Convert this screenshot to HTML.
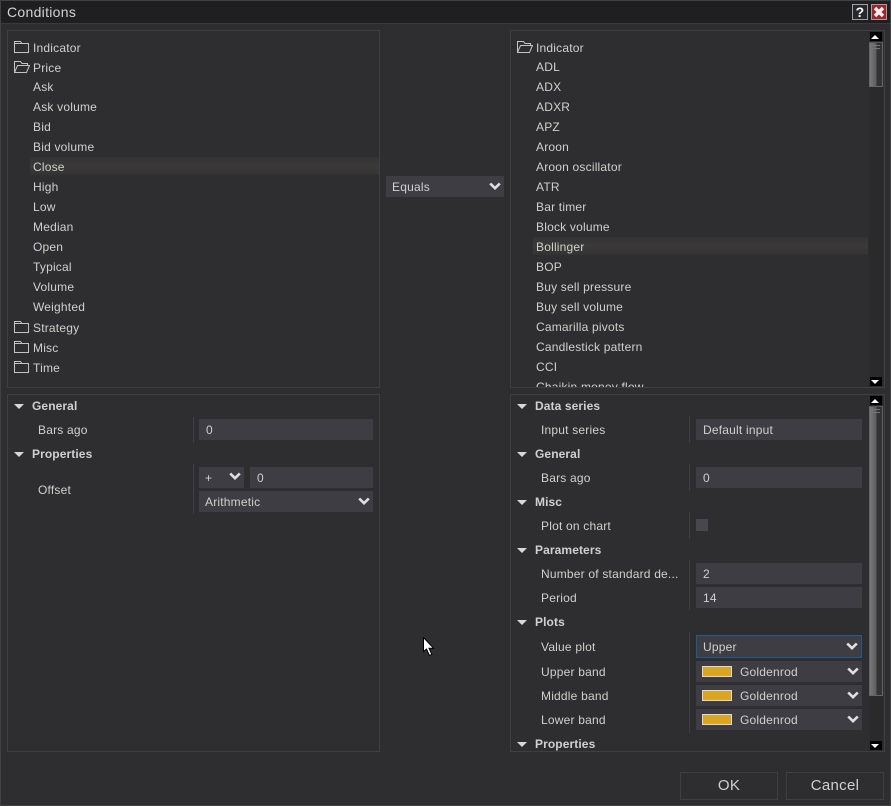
<!DOCTYPE html>
<html><head><meta charset="utf-8"><style>
html,body{margin:0;padding:0;background:#2e2e30}
#r{position:relative;width:891px;height:806px;overflow:hidden;background:#2e2e30;font:12px/16px "Liberation Sans",sans-serif;color:#d0d0cc;letter-spacing:.2px}
#r div,#r svg{position:absolute}
.t{white-space:nowrap;height:16px}
.p{border:1px solid #3f3f41;box-sizing:border-box}
.h{font-weight:bold;color:#d0d0d0;white-space:nowrap;height:16px;letter-spacing:.1px}
.f{background:#3e3d43;height:21px;line-height:23px;white-space:nowrap;box-sizing:border-box;padding-left:7px}
.v{background:#3f3f41;width:1px}
.tri{width:0;height:0;border-left:5px solid transparent;border-right:5px solid transparent;border-top:5px solid #d8d8d8}
.sw{width:30px;height:11px;background:#daa520;border:1px solid #d9d9d9;box-sizing:border-box}
.sb{background:#000;width:12px;height:9px}
.btn{border:1px solid #3f3f41;box-sizing:border-box;height:28px;line-height:26px;text-align:center;font-size:15px;color:#d0d0d0;letter-spacing:.3px}
.trk{background:#2a2a2b;width:14px}
.th{width:14px;box-sizing:border-box;border:1px solid #666;border-top-color:#555;background:linear-gradient(90deg,#777,#5c5c5c 55%,#333 56%,#333)}
.c{fill:none;stroke:#e0e0e0;stroke-width:2.6}
</style></head><body><div id="r">
<div style="left:0;top:0;width:891px;height:24px;background:#1f1f21;border-bottom:1px solid #3a3a3c;box-sizing:border-box"></div>
<div class="t" style="left:7px;top:4px;font-size:14px;color:#d2d2d2;letter-spacing:.3px">Conditions</div>
<div style="left:852px;top:4px;width:16px;height:16px;border:1px solid #a0a0a0;box-sizing:border-box;background:#26282c;color:#fff;font:bold 14px/14px 'Liberation Sans',sans-serif;text-align:center">?</div>
<div style="left:871px;top:4px;width:16px;height:16px;border:1px solid #a0a0a0;box-sizing:border-box;background:#a3232c"></div>
<svg style="left:873px;top:6px" width="12" height="12"><path d="M2 2L10 10M10 2L2 10" stroke="#f6eeee" stroke-width="3.4"/></svg>

<div class="p" style="left:7px;top:30px;width:373px;height:358px"></div>
<div class="p" style="left:510px;top:30px;width:375px;height:358px"></div>
<div class="p" style="left:7px;top:394px;width:373px;height:358px"></div>
<div class="p" style="left:510px;top:394px;width:375px;height:358px"></div>

<div style="left:30px;top:157px;width:349px;height:18px;background:linear-gradient(#333335,#3b3a38 50%,#333335)"></div>
<div style="left:533px;top:237px;width:335px;height:18px;background:linear-gradient(#333335,#3b3a38 50%,#333335)"></div>

<svg style="left:14px;top:40px" width="16" height="14" fill="none" stroke="#c4c4c4"><path d="M.5 12.5V1.5H6.5L8 3.5H14.5V12.5ZM.5 3.5H8"/></svg>
<svg style="left:14px;top:60px" width="16" height="14" fill="none" stroke="#c4c4c4"><path d="M.5 12.5V1.5H6.5L8 3.5H13.5V5.5M.5 12.5L3.5 5.5H15.5L12.5 12.5Z"/></svg>
<svg style="left:14px;top:320px" width="16" height="14" fill="none" stroke="#c4c4c4"><path d="M.5 12.5V1.5H6.5L8 3.5H14.5V12.5ZM.5 3.5H8"/></svg>
<svg style="left:14px;top:340px" width="16" height="14" fill="none" stroke="#c4c4c4"><path d="M.5 12.5V1.5H6.5L8 3.5H14.5V12.5ZM.5 3.5H8"/></svg>
<svg style="left:14px;top:360px" width="16" height="14" fill="none" stroke="#c4c4c4"><path d="M.5 12.5V1.5H6.5L8 3.5H14.5V12.5ZM.5 3.5H8"/></svg>
<svg style="left:517px;top:40px" width="16" height="14" fill="none" stroke="#c4c4c4"><path d="M.5 12.5V1.5H6.5L8 3.5H13.5V5.5M.5 12.5L3.5 5.5H15.5L12.5 12.5Z"/></svg>

<div class="t" style="left:33px;top:40px">Indicator</div>
<div class="t" style="left:33px;top:60px">Price</div>
<div class="t" style="left:33px;top:79px">Ask</div>
<div class="t" style="left:33px;top:99px">Ask volume</div>
<div class="t" style="left:33px;top:119px">Bid</div>
<div class="t" style="left:33px;top:139px">Bid volume</div>
<div class="t" style="left:33px;top:159px">Close</div>
<div class="t" style="left:33px;top:179px">High</div>
<div class="t" style="left:33px;top:199px">Low</div>
<div class="t" style="left:33px;top:219px">Median</div>
<div class="t" style="left:33px;top:239px">Open</div>
<div class="t" style="left:33px;top:259px">Typical</div>
<div class="t" style="left:33px;top:279px">Volume</div>
<div class="t" style="left:33px;top:299px">Weighted</div>
<div class="t" style="left:33px;top:320px">Strategy</div>
<div class="t" style="left:33px;top:340px">Misc</div>
<div class="t" style="left:33px;top:360px">Time</div>

<div class="t" style="left:536px;top:40px">Indicator</div>
<div class="t" style="left:536px;top:59px">ADL</div>
<div class="t" style="left:536px;top:79px">ADX</div>
<div class="t" style="left:536px;top:99px">ADXR</div>
<div class="t" style="left:536px;top:119px">APZ</div>
<div class="t" style="left:536px;top:139px">Aroon</div>
<div class="t" style="left:536px;top:159px">Aroon oscillator</div>
<div class="t" style="left:536px;top:179px">ATR</div>
<div class="t" style="left:536px;top:199px">Bar timer</div>
<div class="t" style="left:536px;top:219px">Block volume</div>
<div class="t" style="left:536px;top:239px">Bollinger</div>
<div class="t" style="left:536px;top:259px">BOP</div>
<div class="t" style="left:536px;top:279px">Buy sell pressure</div>
<div class="t" style="left:536px;top:299px">Buy sell volume</div>
<div class="t" style="left:536px;top:319px">Camarilla pivots</div>
<div class="t" style="left:536px;top:339px">Candlestick pattern</div>
<div class="t" style="left:536px;top:359px">CCI</div>
<div class="t" style="left:536px;top:379px;height:8px;overflow:hidden">Chaikin money flow</div>

<div class="f" style="left:386px;top:176px;width:118px;padding-left:6px">Equals</div>
<svg style="left:489px;top:182px" width="12" height="9" class="c"><path d="M1.2 1.5L6 6.2L10.8 1.5"/></svg>

<!-- scrollbars -->
<div class="trk" style="left:869px;top:31px;height:356px"></div>
<div class="sb" style="left:870px;top:32px"></div>
<div class="tri" style="left:871px;top:35px;border-top:0;border-bottom:4px solid #fff;border-left-width:4px;border-right-width:4px"></div>
<div class="th" style="left:869px;top:42px;height:45px"></div>
<div style="left:871px;top:45px;width:9px;height:1px;background:#777"></div>
<div style="left:871px;top:48px;width:9px;height:1px;background:#777"></div>
<div class="sb" style="left:870px;top:377px"></div>
<div class="tri" style="left:871px;top:380px;border-top:4px solid #fff;border-left-width:4px;border-right-width:4px"></div>

<div class="trk" style="left:869px;top:395px;height:356px"></div>
<div class="sb" style="left:870px;top:396px"></div>
<div class="tri" style="left:871px;top:399px;border-top:0;border-bottom:4px solid #fff;border-left-width:4px;border-right-width:4px"></div>
<div class="th" style="left:869px;top:406px;height:290px"></div>
<div style="left:871px;top:409px;width:9px;height:1px;background:#777"></div>
<div style="left:871px;top:412px;width:9px;height:1px;background:#777"></div>
<div class="sb" style="left:870px;top:741px"></div>
<div class="tri" style="left:871px;top:744px;border-top:4px solid #fff;border-left-width:4px;border-right-width:4px"></div>

<!-- left grid -->
<div class="tri" style="left:14px;top:404px"></div>
<div class="h" style="left:32px;top:398px">General</div>
<div class="t" style="left:38px;top:422px">Bars ago</div>
<div class="v" style="left:193px;top:417px;height:26px"></div>
<div class="f" style="left:199px;top:419px;width:174px">0</div>
<div class="tri" style="left:14px;top:452px"></div>
<div class="h" style="left:32px;top:446px">Properties</div>
<div class="t" style="left:38px;top:482px">Offset</div>
<div class="v" style="left:193px;top:464px;height:50px"></div>
<div class="f" style="left:199px;top:467px;width:45px;padding-left:6px">+</div>
<svg style="left:229px;top:472px" width="12" height="9" class="c"><path d="M1.2 1.5L6 6.2L10.8 1.5"/></svg>
<div class="f" style="left:250px;top:467px;width:123px">0</div>
<div class="f" style="left:199px;top:491px;width:174px;padding-left:6px">Arithmetic</div>
<svg style="left:358px;top:497px" width="12" height="9" class="c"><path d="M1.2 1.5L6 6.2L10.8 1.5"/></svg>

<!-- right grid -->
<div class="tri" style="left:517px;top:404px"></div>
<div class="h" style="left:535px;top:398px">Data series</div>
<div class="t" style="left:541px;top:422px">Input series</div>
<div class="v" style="left:689px;top:416px;height:27px"></div>
<div class="f" style="left:696px;top:419px;width:166px">Default input</div>

<div class="tri" style="left:517px;top:452px"></div>
<div class="h" style="left:535px;top:446px">General</div>
<div class="t" style="left:541px;top:470px">Bars ago</div>
<div class="v" style="left:689px;top:464px;height:27px"></div>
<div class="f" style="left:696px;top:467px;width:166px">0</div>

<div class="tri" style="left:517px;top:500px"></div>
<div class="h" style="left:535px;top:494px">Misc</div>
<div class="t" style="left:541px;top:518px">Plot on chart</div>
<div class="v" style="left:689px;top:512px;height:27px"></div>
<div style="left:696px;top:519px;width:12px;height:12px;background:#48474d"></div>

<div class="tri" style="left:517px;top:548px"></div>
<div class="h" style="left:535px;top:542px">Parameters</div>
<div class="t" style="left:541px;top:566px">Number of standard de...</div>
<div class="v" style="left:689px;top:560px;height:50px"></div>
<div class="f" style="left:696px;top:563px;width:166px">2</div>
<div class="t" style="left:541px;top:590px">Period</div>
<div class="f" style="left:696px;top:587px;width:166px">14</div>

<div class="tri" style="left:517px;top:620px"></div>
<div class="h" style="left:535px;top:614px">Plots</div>
<div class="t" style="left:541px;top:639px">Value plot</div>
<div class="v" style="left:689px;top:632px;height:101px"></div>
<div class="f" style="left:696px;top:635px;width:166px;height:23px;line-height:22px;border:1px solid #1c5d8f;padding-left:6px">Upper</div>
<svg style="left:846px;top:642px" width="12" height="9" class="c"><path d="M1.2 1.5L6 6.2L10.8 1.5"/></svg>

<div class="t" style="left:541px;top:664px">Upper band</div>
<div class="f" style="left:696px;top:661px;width:166px"></div>
<div class="sw" style="left:702px;top:666px"></div>
<div class="t" style="left:740px;top:664px">Goldenrod</div>
<svg style="left:847px;top:667px" width="12" height="9" class="c"><path d="M1.2 1.5L6 6.2L10.8 1.5"/></svg>

<div class="t" style="left:541px;top:688px">Middle band</div>
<div class="f" style="left:696px;top:685px;width:166px"></div>
<div class="sw" style="left:702px;top:690px"></div>
<div class="t" style="left:740px;top:688px">Goldenrod</div>
<svg style="left:847px;top:691px" width="12" height="9" class="c"><path d="M1.2 1.5L6 6.2L10.8 1.5"/></svg>

<div class="t" style="left:541px;top:712px">Lower band</div>
<div class="f" style="left:696px;top:709px;width:166px"></div>
<div class="sw" style="left:702px;top:714px"></div>
<div class="t" style="left:740px;top:712px">Goldenrod</div>
<svg style="left:847px;top:715px" width="12" height="9" class="c"><path d="M1.2 1.5L6 6.2L10.8 1.5"/></svg>

<div class="tri" style="left:517px;top:742px"></div>
<div class="h" style="left:535px;top:736px">Properties</div>

<div class="btn" style="left:680px;top:772px;width:98px">OK</div>
<div class="btn" style="left:786px;top:772px;width:98px">Cancel</div>

<svg style="left:422px;top:637px" width="14" height="20"><path d="M1.5 .5V14.5L4.5 12L7.5 18.5L9.8 17.4L7 11.2H11.5Z" fill="#fff" stroke="#000"/></svg>

<div style="left:0;top:0;width:891px;height:806px;box-sizing:border-box;border:1px solid #414143"></div>
</div></body></html>
